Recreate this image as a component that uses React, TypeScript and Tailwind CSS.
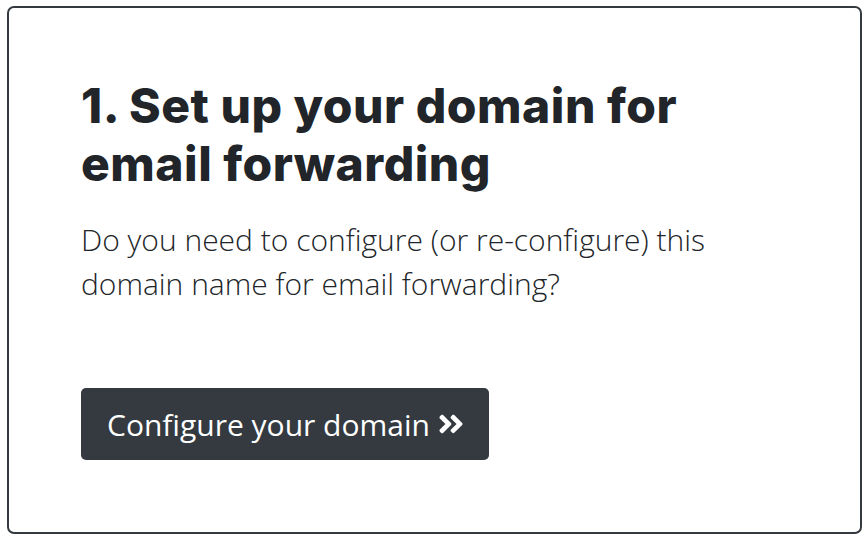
import React from "react";
import { FaAngleDoubleRight } from "react-icons/fa";

const App = () => {
	return (
		<div className="w-[868px] h-[541px] bg-white pt-[6px] pl-[7px]">
			<div className="w-[855px] h-[528px] border-2 border-[#343a40] rounded-[7px] pl-[72px] pt-[69px]">
				<h1 className="font-['Inter',sans-serif] font-extrabold text-[48px] leading-[58px] tracking-[0.5px] text-[#212529]">
					1. Set up your domain for
					<br />
					email forwarding
				</h1>
				<p className="mt-[25px] font-['Open_Sans',sans-serif] font-light text-[30px] leading-[44px] text-[#212529]">
					Do you need to configure (or re-configure) this
					<br />
					domain name for email forwarding?
				</p>
				<button className="mt-[82px] h-[72px] flex items-center pl-[26px] pr-[25px] rounded-[5px] bg-[#343a40] font-['Open_Sans',sans-serif] text-[30px] text-white">
					<span>Configure your domain</span>
					<FaAngleDoubleRight className="ml-[8px] w-[26px] h-[30px]" />
				</button>
			</div>
		</div>
	);
};

export default App;
